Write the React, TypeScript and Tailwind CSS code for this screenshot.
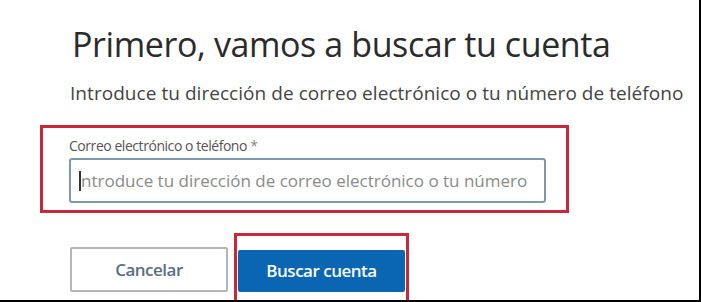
import React from 'react';

const App: React.FC = () => {
  return (
    <div className="w-[701px] h-[302px] overflow-hidden bg-white border-r-2 border-b-2 border-black font-['Open_Sans',sans-serif]">
      <div className="pl-[70px] pt-[22px] flex flex-col">
        <h1 className="ml-[2px] text-[34px] leading-[44px] text-[#2b2b2b] tracking-[-0.4px]">Primero, vamos a buscar tu cuenta</h1>
        <p className="mt-[15px] text-[19px] leading-[24px] text-[#444] tracking-[0.05px]">
          Introduce tu dirección de correo electrónico o tu número de teléfono
        </p>

        <div className="mt-[20px] -ml-[30px] w-[529px] h-[88px] border-[3px] border-[#c9283a] pl-[26px] pr-[20px] pt-[9px]">
          <label className="block text-[14px] leading-[18px] text-[#555] tracking-[-0.45px]">
            Correo electrónico o teléfono<span className="text-[#888]"> *</span>
          </label>
          <div className="mt-[3px] h-[45px] border-2 border-[#7d98ab] rounded-[3px] flex items-center pl-[8px] bg-white">
            <span className="w-[2px] h-[20px] bg-[#333]" />
            <span className="text-[17px] text-[#8a8a8a] tracking-[0px]">
              ntroduce tu dirección de correo electrónico o tu número
            </span>
          </div>
        </div>

        <div className="mt-[20px] flex items-start">
          <button className="mt-[14px] w-[158px] h-[45px] border-2 border-[#b5b5b5] rounded-[2px] bg-white text-[17px] font-semibold text-[#5a6e82] tracking-[-0.5px]">
            Cancelar
          </button>
          <div className="ml-[6px] border-[3px] border-b-0 border-[#c9283a] px-[1px] pt-[14px] pb-[12px]">
            <button className="w-[167px] h-[42px] rounded-[2px] bg-[#0a66b2] text-[17px] font-semibold text-white tracking-[-0.5px]">
              Buscar cuenta
            </button>
          </div>
        </div>
      </div>
    </div>
  );
};

export default App;
